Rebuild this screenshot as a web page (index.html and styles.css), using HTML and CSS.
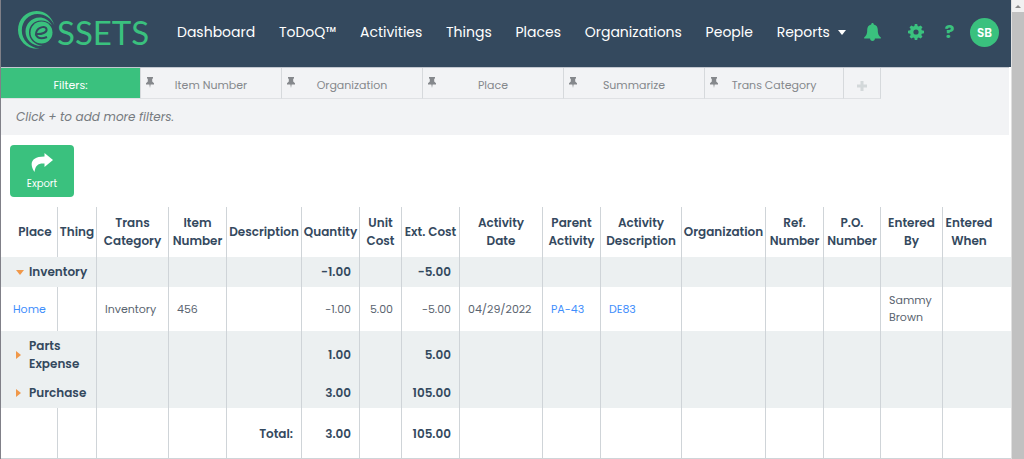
FILE: index.html
```
<!DOCTYPE html>
<html lang="en">
<head>
<meta charset="utf-8">
<title>eSSETS – Transactions</title>
<link rel="stylesheet" href="styles.css">
</head>
<body>
<svg class="defs" aria-hidden="true">
  <symbol id="pin" viewBox="0 0 8 11"><path d="M1 0h6v1.200L6.200 2v2.600L8 6.200v1.200H4.600L4 11l-.6-3.600H0V6.200l1.800-1.600V2L1 1.200z"/></symbol>
</svg>
<div class="page">
  <header class="topbar">
    <a class="logo" href="#" aria-label="eSSETS">
      <svg class="logo-mark" viewBox="0 0 38 40" aria-hidden="true">
        <path d="M37.500 15.500C34 5 27 1 19.500 1C9 1 1 9.500 1 20C1 31 10 39.500 22.500 38.800C12 37 4.800 30 4.800 20.500C4.800 11 12 4 20.500 4C28 4 34 8 37.500 15.500z"/>
        <path d="M35 15.500C32 10 27 7.500 22.500 7.500C14.500 7.500 8.500 14 8.500 21.500C8.500 29.500 15 36.500 25.500 36C17 34.500 12 29 12 22.500C12 15.500 17 10.500 24 10.500C28.500 10.500 32 12 35 15.500z"/>
        <circle cx="24.500" cy="22.500" r="11"/>
        <path class="logo-e" d="M19 24C24.500 24.500 30.500 22.500 29.500 19C28.500 16 22.500 16.500 20 20.500C17 26 21.500 30.500 30 27"/>
      </svg>
      <span class="logo-text">SSETS</span>
    </a>
    <nav class="nav">
      <a href="#">Dashboard</a>
      <a href="#">ToDoQ™</a>
      <a href="#">Activities</a>
      <a href="#">Things</a>
      <a href="#">Places</a>
      <a href="#">Organizations</a>
      <a href="#">People</a>
      <a href="#" class="has-menu">Reports</a>
    </nav>
    <div class="tools">
      <button class="tool" aria-label="Notifications"><svg width="17" height="18" viewBox="0 0 17 18"><path d="M8.500 0c.8 0 1.300.6 1.300 1.500C12.500 2 13.800 4 13.800 7c0 4 .8 5.500 3 7.300V15.500H.2V14.300C2.400 12.500 3.200 11 3.200 7c0-3 1.300-5 4-5.500C7.200.6 7.700 0 8.500 0zM6 15h5c0 2-1 3-2.500 3S6 17 6 15z"/></svg></button>
      <button class="tool" aria-label="Settings"><svg width="16" height="16" viewBox="0 0 16 16"><path fill-rule="evenodd" d="M6.800 0h2.400l.4 2.100 1.200.5L12.600 1.400l1.900 1.900-1.200 1.800.5 1.200 2.200.5v2.400l-2.200.5-.5 1.200 1.200 1.800-1.900 1.900-1.800-1.200-1.200.5L9.200 16H6.800l-.4-2.100-1.200-.5-1.800 1.200-1.900-1.900 1.200-1.800-.5-1.200L0 9.200V6.800l2.200-.5.500-1.200L1.500 3.300l1.900-1.900 1.800 1.200 1.200-.5zM8 5.400a2.600 2.600 0 1 0 0 5.200 2.600 2.600 0 0 0 0-5.200z"/></svg></button>
      <button class="tool help" aria-label="Help">?</button>
      <button class="avatar">SB</button>
    </div>
  </header>

  <section class="filters">
    <div class="tabs">
      <span class="tab tab-label">Filters:</span>
      <button class="tab"><svg class="pin"><use href="#pin"/></svg>Item Number</button>
      <button class="tab"><svg class="pin"><use href="#pin"/></svg>Organization</button>
      <button class="tab"><svg class="pin"><use href="#pin"/></svg>Place</button>
      <button class="tab"><svg class="pin"><use href="#pin"/></svg>Summarize</button>
      <button class="tab"><svg class="pin"><use href="#pin"/></svg>Trans Category</button>
      <button class="tab tab-add" aria-label="Add filter"><svg width="10" height="10" viewBox="0 0 10 10"><path d="M3.500 0h3v3.500H10v3H6.500V10h-3V6.500H0v-3h3.500z"/></svg></button>
    </div>
    <p class="hint">Click + to add more filters.</p>
  </section>

  <div class="actions">
    <button class="export">
      <svg width="22" height="19" viewBox="0 0 22 19"><path d="M13.500 0L22 7L13.500 14V10.500C7.500 10 4.500 12 3.500 19C-2 11 0 3.500 13.500 3.500z"/></svg>
      Export
    </button>
  </div>

  <table class="grid">
    <colgroup>
      <col class="w57"><col class="w39"><col class="w72"><col class="w58"><col class="w75"><col class="w58"><col class="w42"><col class="w58"><col class="w83"><col class="w58"><col class="w81"><col class="w84"><col class="w58"><col class="w57"><col class="w62"><col class="w68">
    </colgroup>
    <thead>
      <tr><th class="first">Place</th><th>Thing</th><th>Trans Category</th><th>Item Number</th><th>Description</th><th>Quantity</th><th>Unit Cost</th><th>Ext. Cost</th><th class="narrow">Activity Date</th><th>Parent Activity</th><th>Activity Description</th><th>Organization</th><th>Ref. Number</th><th>P.O. Number</th><th>Entered By</th><th class="last">Entered When</th></tr>
    </thead>
    <tbody>
      <tr class="group"><td colspan="2"><button class="toggle open">Inventory</button></td><td></td><td></td><td></td><td class="num">-1.00</td><td></td><td class="num">-5.00</td><td></td><td></td><td></td><td></td><td></td><td></td><td></td><td></td></tr>
      <tr class="item"><td class="place"><a href="#">Home</a></td><td></td><td>Inventory</td><td>456</td><td></td><td class="num">-1.00</td><td class="num">5.00</td><td class="num">-5.00</td><td>04/29/2022</td><td><a href="#">PA-43</a></td><td><a href="#">DE83</a></td><td></td><td></td><td></td><td>Sammy Brown</td><td></td></tr>
      <tr class="group tall"><td colspan="2"><button class="toggle">Parts<br>Expense</button></td><td></td><td></td><td></td><td class="num">1.00</td><td></td><td class="num">5.00</td><td></td><td></td><td></td><td></td><td></td><td></td><td></td><td></td></tr>
      <tr class="group"><td colspan="2"><button class="toggle">Purchase</button></td><td></td><td></td><td></td><td class="num">3.00</td><td></td><td class="num">105.00</td><td></td><td></td><td></td><td></td><td></td><td></td><td></td><td></td></tr>
    </tbody>
    <tfoot>
      <tr><td></td><td></td><td></td><td></td><td class="num">Total:</td><td class="num">3.00</td><td></td><td class="num">105.00</td><td></td><td></td><td></td><td></td><td></td><td></td><td></td><td></td></tr>
    </tfoot>
  </table>
</div>
<div class="scrollbar" aria-hidden="true"><span class="scroll-up"></span><span class="thumb"></span></div>
</body>
</html>
```
FILE: styles.css
```
* { box-sizing: border-box; }
body {
  margin: 0;
  display: flex;
  min-height: 100vh;
  background: #fff;
  color: #34495e;
  font-family: Poppins, Inter, "Open Sans", sans-serif;
  font-size: 11px;
}
button { font: inherit; color: inherit; background: none; border: 0; padding: 0; }
a { color: #3f8efc; text-decoration: none; }
.defs { display: none; }
.page { flex: 1; min-width: 0; border-left: 1px solid #808088; }

.topbar {
  display: flex;
  align-items: center;
  height: 67px;
  padding: 0 12px 0 16px;
  background: #34495e;
}
.logo { display: flex; align-items: center; height: 60px; width: 160px; color: #3ac17e; padding-bottom: 7px; }
.logo-mark { width: 38px; height: 40px; fill: #3ac17e; }
.logo-e { fill: none; stroke: #34495e; stroke-width: 2; }
.logo-text { font-family: Lato, sans-serif; font-size: 33px; line-height: 40px; margin-left: 2px; padding-top: 4px; }
.nav { flex: 1; display: flex; justify-content: space-between; margin-right: 18px; padding-bottom: 3px; }
.nav a { color: #fff; font-size: 14px; line-height: 22px; white-space: nowrap; }
.has-menu::after {
  content: "";
  display: inline-block;
  margin-left: 8px;
  vertical-align: 2px;
  border: 4px solid transparent;
  border-top: 5px solid #fff;
  border-bottom: 0;
}
.tools { display: flex; align-items: center; color: #3ac17e; padding-bottom: 2px; }
.tool { display: flex; justify-content: center; fill: currentColor; width: 17px; margin-right: 26px; padding-bottom: 2px; }
.tool.help { width: 9px; margin: 0 16px 0 -5px; font-size: 18px; line-height: 20px; font-weight: 700; }
.avatar { width: 29px; height: 29px; border-radius: 50%; background: #3ac17e; color: #fff; font-size: 12px; font-weight: 600; }

.filters { background: #f2f3f5; height: 68px; border-top: 1px solid #c3c8d0; margin-right: 2px; }
.tabs { display: flex; height: 31px; }
.tab {
  position: relative;
  flex: 0 0 141px;
  display: flex;
  align-items: center;
  justify-content: center;
  padding-top: 5px;
  color: #85888c;
  border-right: 1px solid #d6d9dc;
  border-bottom: 1px solid #dfe1e4;
}
.tab:nth-last-child(2) { flex-basis: 139px; }
.tab.tab-label { background: #3ac17e; color: #fff; flex-basis: 140px; }
.tab.tab-add { flex-basis: 37px; fill: #d3d8da; }
.pin { position: absolute; left: 5px; top: 9px; width: 8px; height: 11px; fill: #85888c; }
.hint { margin: 0; padding: 8px 15px; font-size: 12px; line-height: 20px; font-style: italic; color: #777b80; }

.actions { padding: 10px 9px; }
.export {
  display: flex;
  flex-direction: column;
  align-items: center;
  gap: 4px;
  width: 64px;
  height: 52px;
  padding-top: 8px;
  border-radius: 4px;
  background: #3ac17e;
  color: #fff;
  fill: #fff;
  font-size: 10px;
  line-height: 16px;
}

.grid { width: 100%; table-layout: fixed; border-collapse: separate; border-spacing: 0; }
.w39 { width: 39px; }
.w42 { width: 42px; }
.w57 { width: 57px; }
.w58 { width: 58px; }
.w62 { width: 62px; }
.w68 { width: 68px; }
.w72 { width: 72px; }
.w75 { width: 75px; }
.w81 { width: 81px; }
.w83 { width: 83px; }
.w84 { width: 84px; }
.grid th, .grid td { padding: 0 8px; border-right: 1px solid #cfd4d8; line-height: 18px; }
.grid th { height: 50px; padding: 0; font-size: 12px; font-weight: 600; }
.grid th.first { padding-left: 12px; }
.grid th.narrow { padding: 0 8px; }
.grid th.last { padding-right: 16px; }
.grid th:last-child, .grid td:last-child { border-right: 0; }
.grid .num { text-align: right; white-space: nowrap; }
.group td { height: 30px; background: #ecf0f1; font-size: 12px; font-weight: 600; }
.grid .group td:first-child { padding-left: 15px; }
.group.tall td { height: 47px; }
.item td { height: 44px; color: #5a6470; line-height: 17px; }
.grid .item .place { padding: 0 0 0 12px; }
.grid tfoot td { height: 51px; padding-top: 2px; font-size: 12px; font-weight: 600; border-bottom: 1px solid #cfd4d8; }
.toggle { display: flex; align-items: center; gap: 8px; font-weight: 600; text-align: left; }
.toggle::before { content: ""; border: 4px solid transparent; border-left: 5px solid #f0984a; border-right: 0; }
.toggle.open { gap: 5px; }
.toggle.open::before { border: 4px solid transparent; border-top: 5px solid #f0984a; border-bottom: 0; }

.scrollbar { width: 13px; background: #c1c1c1; border-left: 1px solid #e0e0e0; display: flex; flex-direction: column; }
.scroll-up { height: 12px; background: #f1f1f1; display: flex; justify-content: center; align-items: center; }
.scroll-up::before { content: ""; border: 3px solid transparent; border-bottom: 3px solid #8a8a8a; border-top: 0; }
.thumb { flex: 1; background: #c1c1c1; }
```
